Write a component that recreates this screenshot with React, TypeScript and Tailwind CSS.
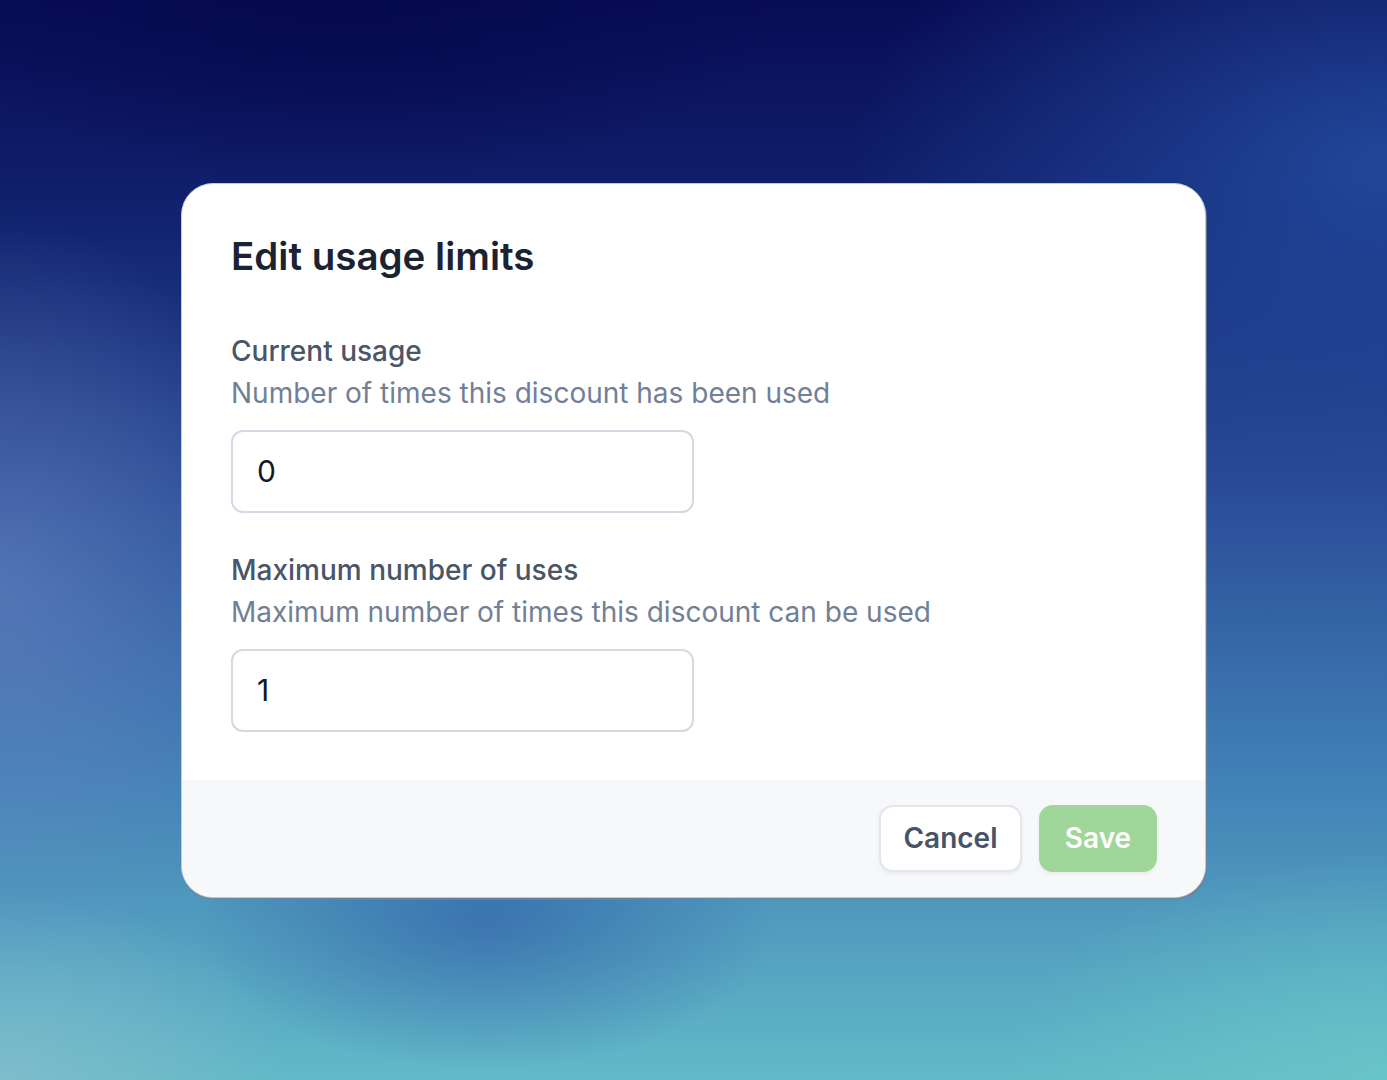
import { useState } from 'react';

type Field = { id: string; label: string; hint: string; value: string };

const FIELDS: Field[] = [
  { id: 'current', label: 'Current usage', hint: 'Number of times this discount has been used', value: '0' },
  { id: 'max', label: 'Maximum number of uses', hint: 'Maximum number of times this discount can be used', value: '1' },
];

export default function App() {
  const [values, setValues] = useState<Record<string, string>>({ current: '0', max: '1' });

  return (
    <div className="relative min-h-screen w-full flex items-center justify-center overflow-hidden bg-[linear-gradient(180deg,#080c54_0%,#11226f_20%,#2a4d98_46%,#4181b6_72%,#62b9c7_100%)] font-['Inter','Noto_Sans',sans-serif]">
      {/* background glow */}
      <div className="pointer-events-none absolute inset-0 bg-[radial-gradient(ellipse_30%_50%_at_0%_55%,rgba(110,135,195,0.55),transparent_70%),radial-gradient(ellipse_55%_45%_at_100%_15%,rgba(40,85,170,0.75),transparent_70%),radial-gradient(ellipse_40%_30%_at_100%_100%,rgba(105,200,200,0.75),transparent_70%),radial-gradient(ellipse_30%_25%_at_0%_100%,rgba(135,190,205,0.75),transparent_70%),radial-gradient(ellipse_45%_25%_at_25%_0%,rgba(5,8,75,0.85),transparent_70%),radial-gradient(ellipse_30%_20%_at_35%_85%,rgba(45,90,165,0.6),transparent_70%)]" />

      <div className="relative w-[1025px] rounded-[32px] bg-white overflow-hidden border border-[#c3cad5] shadow-[1px_2px_0_rgba(120,130,145,0.7)]">
        <div className="px-[49px] pt-[45px] pb-[48px]">
          <h2 className="text-[38.5px] leading-[54px] font-semibold text-[#1b2230]">Edit usage limits</h2>

          <div className="mt-[47px] flex flex-col gap-[36px]">
            {FIELDS.map((f) => (
              <div key={f.id} className="flex flex-col">
                <label htmlFor={f.id} className="text-[28px] leading-[42px] font-medium text-[#4a5568]">
                  {f.label}
                </label>
                <p className="text-[28px] leading-[42px] text-[#718096]">{f.hint}</p>
                <input
                  id={f.id}
                  type="text"
                  value={values[f.id]}
                  onChange={(e) => setValues({ ...values, [f.id]: e.target.value })}
                  className="mt-[16px] w-[463px] h-[83px] rounded-[12px] border-2 border-[#d3dae3] bg-white px-[24px] text-[30px] text-[#111827] outline-none"
                />
              </div>
            ))}
          </div>
        </div>

        <div className="flex items-center justify-end gap-[17px] bg-[#f6f8f9] px-[48px] pt-[25px] pb-[25px]">
          <button className="h-[67px] w-[143px] rounded-[14px] border-2 border-[#e3e6eb] bg-white text-[28px] font-semibold text-[#475467] shadow-[0_2px_4px_rgba(0,0,0,0.06)]">
            Cancel
          </button>
          <button className="h-[67px] w-[118px] rounded-[14px] bg-[#a0d699] text-[28px] font-semibold text-white shadow-[0_2px_4px_rgba(0,0,0,0.06)]">
            Save
          </button>
        </div>
      </div>
    </div>
  );
}
